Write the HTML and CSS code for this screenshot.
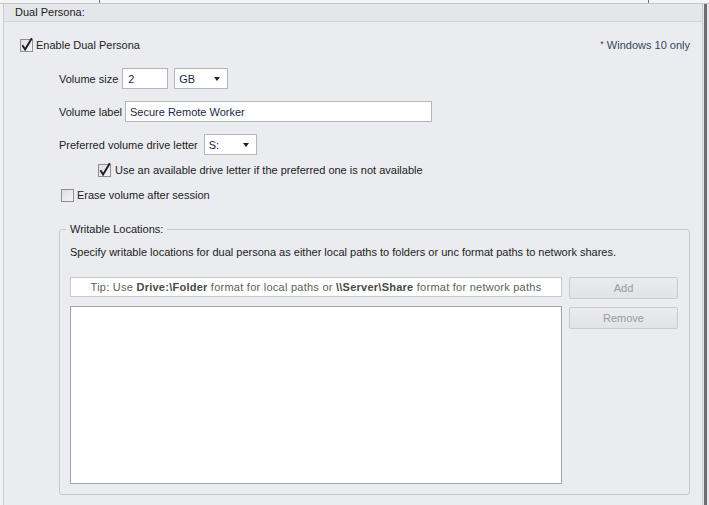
FILE: index.html
```html
<!DOCTYPE html>
<html>
<head>
<meta charset="utf-8">
<link rel="stylesheet" href="styles.css">
</head>
<body>
<div class="frame">
  <div class="topstrip">
    <span class="tick tick-a"></span>
    <span class="tick tick-b"></span>
  </div>
  <div class="main">
    <div class="leftpad"></div>
    <div class="panel">
      <div class="panel-head">Dual Persona:</div>
      <div class="panel-body">
        <div class="row-top">
          <label class="check">
            <svg class="cb" width="13" height="13" viewBox="0 0 13 13"><defs><linearGradient id="g1" x1="0" y1="0" x2="1" y2="1"><stop offset="0" stop-color="#dcdde0"/><stop offset="1" stop-color="#f6f6f7"/></linearGradient></defs><rect x="0.5" y="0.5" width="12" height="12" fill="url(#g1)" stroke="#8e8f92"/><path d="M2.4 6.2 L5.1 10.4 L11.8 -0.8" fill="none" stroke="#1c1c1c" stroke-width="1.9"/></svg>
            <span>Enable Dual Persona</span>
          </label>
          <span class="note"><span class="star">*</span> Windows 10 only</span>
        </div>

        <div class="frow r-size">
          <span class="lbl">Volume size</span>
          <div class="box w-size"><span class="val">2</span></div>
          <div class="box sel w-gb"><span class="val">GB</span><span class="arrow"></span></div>
        </div>

        <div class="frow r-label">
          <span class="lbl">Volume label</span>
          <div class="box w-label"><span class="val">Secure Remote Worker</span></div>
        </div>

        <div class="frow r-drive">
          <span class="lbl">Preferred volume drive letter</span>
          <div class="box sel w-drive"><span class="val">S:</span><span class="arrow"></span></div>
        </div>

        <label class="check sub">
          <svg class="cb" width="13" height="13" viewBox="0 0 13 13"><defs><linearGradient id="g2" x1="0" y1="0" x2="1" y2="1"><stop offset="0" stop-color="#dcdde0"/><stop offset="1" stop-color="#f6f6f7"/></linearGradient></defs><rect x="0.5" y="0.5" width="12" height="12" fill="url(#g2)" stroke="#8e8f92"/><path d="M2.4 6.2 L5.1 10.4 L11.8 -0.8" fill="none" stroke="#1c1c1c" stroke-width="1.9"/></svg>
          <span>Use an available drive letter if the preferred one is not available</span>
        </label>

        <label class="check erase">
          <svg class="cb" width="13" height="13" viewBox="0 0 13 13"><defs><linearGradient id="g3" x1="0" y1="0" x2="1" y2="1"><stop offset="0" stop-color="#dcdde0"/><stop offset="1" stop-color="#f6f6f7"/></linearGradient></defs><rect x="0.5" y="0.5" width="12" height="12" fill="url(#g3)" stroke="#8e8f92"/></svg>
          <span>Erase volume after session</span>
        </label>

        <fieldset class="group">
          <legend>Writable Locations:</legend>
          <div class="desc">Specify writable locations for dual persona as either local paths to folders or unc format paths to network shares.</div>
          <div class="grid">
            <div class="tip">Tip: Use <b>Drive:\Folder</b> format for local paths or <b>\\Server\Share</b> format for network paths</div>
            <div class="btn">Add</div>
            <div class="list"></div>
            <div class="btn btn-remove">Remove</div>
          </div>
        </fieldset>
      </div>
    </div>
    <div class="gap1"></div>
    <div class="darkbar"></div>
    <div class="rightpad"></div>
  </div>
</div>
</body>
</html>
```
FILE: styles.css
```css
html, body {
  margin: 0;
  padding: 0;
}
body {
  font-family: "Liberation Sans", Arial, sans-serif;
  font-size: 11px;
  color: #222;
  background: #ebecf0;
}
.frame {
  width: 709px;
  height: 505px;
  overflow: hidden;
  display: flex;
  flex-direction: column;
  background: #ebecf0;
}
.topstrip {
  height: 3px;
  flex: none;
  background: #f4f4f6;
  border-bottom: 1px solid #c3c5ca;
  display: flex;
}
.tick {
  width: 1px;
  height: 3px;
  background: #707070;
}
.tick-a { margin-left: 99px; }
.tick-b { margin-left: 548px; }

.main {
  flex: 1;
  display: flex;
  min-height: 0;
}
.leftpad {
  width: 3px;
  background: #f2f2f4;
}
.panel {
  width: 698px;
  border-left: 1px solid #c9cbd0;
  border-right: 1px solid #c9cbd0;
  background: #ebecf0;
  display: flex;
  flex-direction: column;
}
.gap1 {
  width: 1px;
  background: #e6e7ea;
}
.darkbar {
  width: 3px;
  background: #6e6e70;
}
.rightpad {
  width: 2px;
  background: #e8e8ea;
}

.panel-head {
  height: 17px;
  line-height: 17px;
  padding-left: 11px;
  background: #e4e6ea;
  border-bottom: 1px solid #d3d5da;
  color: #222;
}
.panel-body {
  padding: 0 12px 0 16px;
  display: flex;
  flex-direction: column;
  align-items: flex-start;
}

.check {
  display: flex;
  align-items: center;
  gap: 3px;
  height: 14px;
  line-height: 14px;
}
.cb {
  flex: none;
  overflow: visible;
}

.row-top {
  align-self: stretch;
  margin-top: 13px;
  height: 20px;
  display: flex;
  align-items: center;
  justify-content: space-between;
}
.note {
  color: #34465a;
}
.star {
  font-size: 9px;
  vertical-align: 2px;
}

.frow {
  margin-left: 39px;
  display: flex;
  align-items: center;
  gap: 6px;
  height: 21px;
}
.r-size { margin-top: 13px; gap: 4px; }
.r-size .w-gb { margin-left: 2px; }
.r-label { margin-top: 12px; gap: 3px; }
.r-drive { margin-top: 12px; gap: 6px; }

.box {
  box-sizing: border-box;
  height: 21px;
  background: #fff;
  border: 1px solid #b4b6bc;
  display: flex;
  align-items: center;
  padding-left: 4px;
  color: #1f1f48;
}
.w-size { width: 46px; padding-left: 5px; }
.w-gb { width: 54px; }
.w-label { width: 307px; }
.w-drive { width: 53px; }
.sel {
  justify-content: space-between;
  padding-right: 7px;
}
.arrow {
  width: 0;
  height: 0;
  border-left: 3.5px solid transparent;
  border-right: 3.5px solid transparent;
  border-top: 4px solid #222;
}

.sub {
  margin-top: 8px;
  margin-left: 78px;
  gap: 4px;
}
.erase {
  margin-top: 11px;
  margin-left: 41px;
}

.group {
  margin: 20px 0 0 39px;
  align-self: stretch;
  border: 1px solid #c6c8cd;
  border-radius: 3px;
  padding: 0 12px 10px 10px;
  min-width: 0;
}
.group legend {
  padding: 0 4px;
  margin-left: -4px;
  line-height: 14px;
}
.desc {
  margin-top: 9px;
  line-height: 14px;
}
.grid {
  margin-top: 18px;
  display: grid;
  grid-template-columns: 492px 109px;
  column-gap: 7px;
  row-gap: 7px;
  align-items: start;
}
.tip {
  box-sizing: border-box;
  height: 20px;
  background: #fff;
  border: 1px solid #c6c8cd;
  text-align: center;
  line-height: 18px;
  color: #5e5e5e;
  letter-spacing: 0.25px;
  white-space: nowrap;
}
.tip b {
  color: #4a4a4a;
}
.btn {
  box-sizing: border-box;
  height: 22px;
  line-height: 20px;
  text-align: center;
  border: 1px solid #c9cacf;
  border-radius: 2px;
  background: linear-gradient(#eaebee, #e2e3e7);
  color: #9b9b9e;
}
.btn-remove {
  margin-top: 1px;
}
.list {
  box-sizing: border-box;
  height: 178px;
  background: #fff;
  border: 1px solid #a3a5ac;
}
```
